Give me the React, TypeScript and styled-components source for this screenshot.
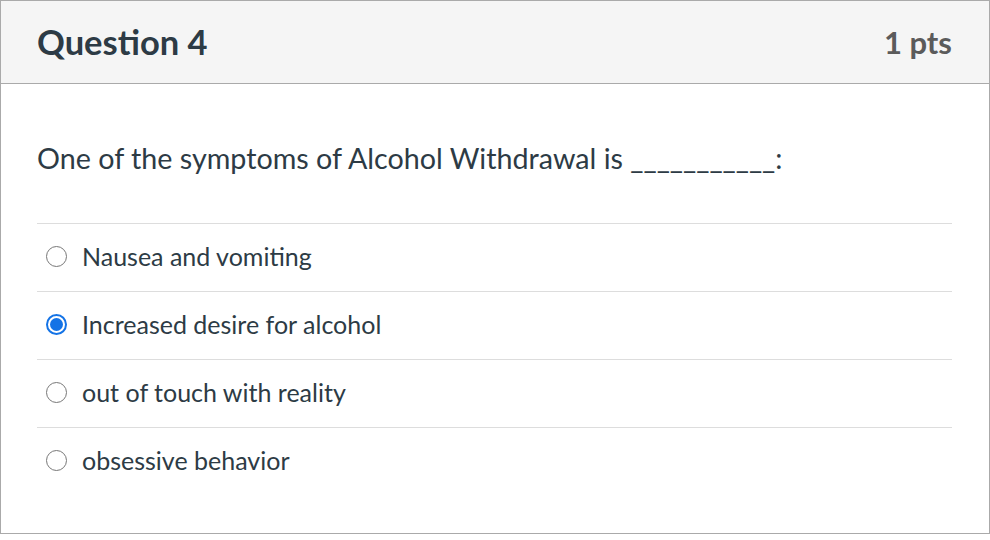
import React from "react";
import styled, { createGlobalStyle } from "styled-components";

const Global = createGlobalStyle`
  html, body { margin: 0; padding: 0; background: #fff; }
  body { font-family: Lato, "Open Sans", "Liberation Sans", sans-serif; color: #2d3b45; }
`;

const Card = styled.div`
  width: 990px;
  height: 534px;
  box-sizing: border-box;
  border: 1px solid #aaaaaa;
  display: flex;
  flex-direction: column;
`;

const Header = styled.div`
  height: 83px;
  box-sizing: border-box;
  background: #f5f5f5;
  border-bottom: 1px solid #aaaaaa;
  display: flex;
  align-items: center;
  justify-content: space-between;
  padding: 0 37px 0 36px;
`;

const Title = styled.h2`
  margin: 0;
  font-size: 34.5px;
  line-height: 40px;
  font-weight: 700;
  color: #2d3b45;
`;

const Points = styled.div`
  font-size: 31px;
  line-height: 40px;
  font-weight: 700;
  color: #5b5b5b;
`;

const Body = styled.div`
  padding: 56px 37px 0 36px;
`;

const QuestionText = styled.p`
  margin: 0;
  font-size: 28.7px;
  line-height: 36px;
  color: #2d3b45;
`;

const Answers = styled.div`
  margin-top: 47px;
`;

const Row = styled.label`
  display: flex;
  align-items: center;
  height: 68px;
  box-sizing: border-box;
  border-top: 1px solid #dddddd;
  padding: 0 0 3px 9px;
  gap: 15px;
  font-size: 25px;
  color: #2d3b45;
`;

const Radio = styled.span<{ $checked?: boolean }>`
  width: 21px;
  height: 21px;
  box-sizing: border-box;
  border-radius: 50%;
  border: ${(p) => (p.$checked ? "2px solid #1473e6" : "1.5px solid #777777")};
  display: flex;
  align-items: center;
  justify-content: center;
  flex-shrink: 0;
  &::after {
    content: "";
    display: ${(p) => (p.$checked ? "block" : "none")};
    width: 13px;
    height: 13px;
    border-radius: 50%;
    background: #1473e6;
  }
`;

const answers = [
  { text: "Nausea and vomiting", checked: false },
  { text: "Increased desire for alcohol", checked: true },
  { text: "out of touch with reality", checked: false },
  { text: "obsessive behavior", checked: false },
];

export default function App() {
  return (
    <>
      <Global />
      <Card>
        <Header>
          <Title>Question 4</Title>
          <Points>1 pts</Points>
        </Header>
        <Body>
          <QuestionText>One of the symptoms of Alcohol Withdrawal is ___________:</QuestionText>
          <Answers>
            {answers.map((a) => (
              <Row key={a.text}>
                <Radio $checked={a.checked} />
                {a.text}
              </Row>
            ))}
          </Answers>
        </Body>
      </Card>
    </>
  );
}
